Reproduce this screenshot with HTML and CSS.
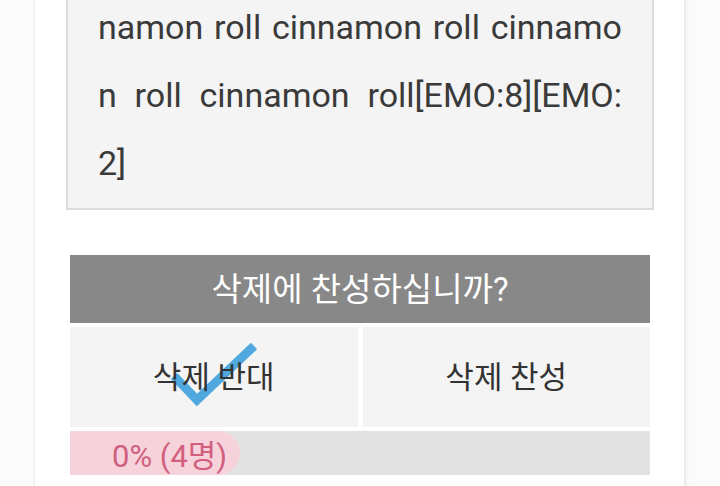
FILE: index.html
```html
<!DOCTYPE html>
<html lang="ko">
<head>
<meta charset="utf-8">
<title>삭제 투표</title>
<link rel="stylesheet" href="styles.css">
</head>
<body>
<div class="card">
  <div class="quote">
    <span class="line just">namon roll cinnamon roll cinnamo</span>
    <span class="line just">n roll cinnamon roll[EMO:8][EMO:</span>
    <span class="line">2]</span>
  </div>
  <div class="vote">
    <div class="vote-title">삭제에 찬성하십니까?</div>
    <div class="vote-buttons">
      <div class="vote-btn selected">
        <svg class="check" width="200" height="100" viewBox="0 0 200 100" aria-hidden="true">
          <polyline points="104,49 127,73 184,19" fill="none" stroke="#4fa8de" stroke-width="9" stroke-linejoin="miter"/>
        </svg>
        <span class="btn-label">삭제 반대</span>
      </div>
      <div class="vote-btn"><span class="btn-label">삭제 찬성</span></div>
    </div>
    <div class="vote-bar">
      <div class="vote-fill">0% (4명)</div>
    </div>
  </div>
</div>
</body>
</html>
```

FILE: styles.css
```css
html, body {
  margin: 0;
  padding: 0;
  overflow: hidden;
  background: #fbfbfb;
}
body {
  font-family: Roboto, "Noto Sans CJK KR", sans-serif;
  color: #3a3a3a;
}
.card {
  margin: 0 36px 0 35px;
  background: #ffffff;
  box-shadow: 0 0 3px rgba(0, 0, 0, 0.12), 2px 0 6px rgba(0, 0, 0, 0.04);
  padding: 0 30px 40px 31px;
}
.quote {
  margin-top: -7px;
  background: #f4f4f4;
  border: 2px solid #dcdcdc;
  border-top: none;
  padding: 0 30px 11px 30px;
  font-size: 34px;
  line-height: 68px;
}
.line {
  display: block;
  white-space: nowrap;
}
.line.just {
  text-align: justify;
  text-align-last: justify;
  white-space: normal;
}
.vote {
  margin: 45px 4px 0 4px;
}
.vote-title {
  height: 68px;
  box-sizing: border-box;
  padding-bottom: 5px;
  background: #888888;
  color: #ffffff;
  font-size: 33px;
  display: flex;
  align-items: center;
  justify-content: center;
}
.vote-buttons {
  display: grid;
  grid-template-columns: 1fr 1fr;
  gap: 5px;
  margin-top: 4px;
}
.vote-btn {
  position: relative;
  height: 100px;
  background: #f4f4f4;
  display: flex;
  align-items: center;
  justify-content: center;
  font-size: 31px;
  color: #333333;
}
.check {
  position: absolute;
  left: 0;
  top: 0;
}
.btn-label {
  position: relative;
  margin-top: -6px;
}
.vote-bar {
  margin-top: 4px;
  height: 44px;
  background: #e2e2e2;
}
.vote-fill {
  width: 128px;
  height: 44px;
  box-sizing: content-box;
  padding-left: 42px;
  background: #f6d2db;
  border-radius: 0 22px 22px 0;
  color: #d25f7e;
  font-size: 31px;
  display: flex;
  align-items: center;
  white-space: nowrap;
}
```
